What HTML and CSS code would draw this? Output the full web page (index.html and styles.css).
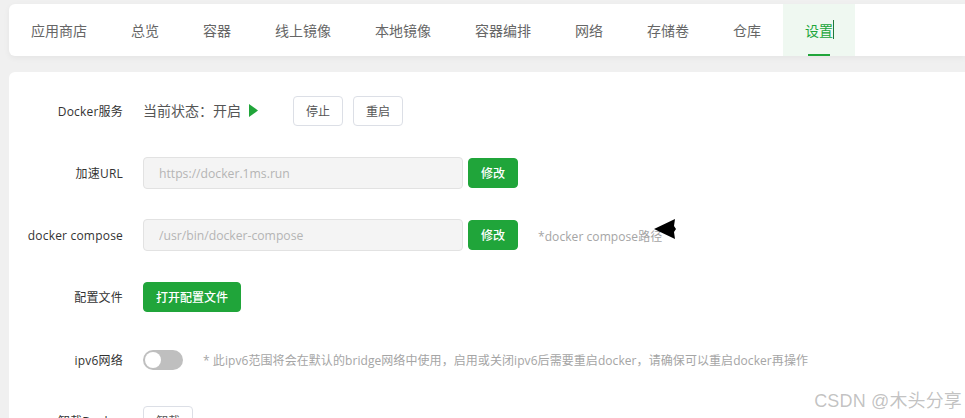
FILE: index.html
```html
<!DOCTYPE html>
<html lang="zh-CN">
<head>
<meta charset="utf-8">
<title>Docker 设置</title>
<link rel="stylesheet" href="styles.css">
</head>
<body>
<nav class="tabs">
  <a class="tab">应用商店</a>
  <a class="tab">总览</a>
  <a class="tab">容器</a>
  <a class="tab">线上镜像</a>
  <a class="tab">本地镜像</a>
  <a class="tab">容器编排</a>
  <a class="tab">网络</a>
  <a class="tab">存储卷</a>
  <a class="tab">仓库</a>
  <a class="tab tab-active">设置<i class="caret"></i></a>
</nav>
<main class="card">
  <div class="row">
    <label class="label">Docker服务</label>
    <div class="control">
      <span class="status">当前状态：开启</span>
      <svg class="play" width="9" height="13" viewBox="0 0 9 13"><path d="M0 0L9 6.5L0 13Z" fill="#20a53a"/></svg>
      <button class="btn btn-first">停止</button>
      <button class="btn">重启</button>
    </div>
  </div>
  <div class="row">
    <label class="label">加速URL</label>
    <div class="control">
      <input class="input" disabled placeholder="https://docker.1ms.run">
      <button class="btn btn-primary btn-edit">修改</button>
    </div>
  </div>
  <div class="row">
    <label class="label">docker compose</label>
    <div class="control">
      <input class="input" disabled placeholder="/usr/bin/docker-compose">
      <button class="btn btn-primary btn-edit">修改</button>
      <span class="hint hint-compose">*docker compose路径</span>
    </div>
  </div>
  <div class="row">
    <label class="label">配置文件</label>
    <div class="control">
      <button class="btn btn-primary btn-wide">打开配置文件</button>
    </div>
  </div>
  <div class="row row-switch">
    <label class="label">ipv6网络</label>
    <div class="control">
      <span class="switch"><i class="knob"></i></span>
      <span class="hint hint-switch">* 此ipv6范围将会在默认的bridge网络中使用，启用或关闭ipv6后需要重启docker，请确保可以重启docker再操作</span>
    </div>
  </div>
  <div class="row">
    <label class="label">卸载Docker</label>
    <div class="control">
      <button class="btn">卸载</button>
    </div>
  </div>
</main>
<svg class="pointer" width="24" height="22" viewBox="0 0 24 22"><path d="M1 11L22 1L21 8L23 11L21 14L22 21Z" fill="#000"/></svg>
<div class="watermark">CSDN @木头分享</div>
</body>
</html>
```

FILE: styles.css
```css
* { box-sizing: border-box; }
html, body { height: 100%; }
body {
  margin: 0;
  height: 418px;
  overflow: hidden;
  position: relative;
  padding: 4px 0 0 9px;
  background: #f0f0f0;
  font-family: "Open Sans", "Noto Sans CJK SC", sans-serif;
  color: #333;
}
.tabs {
  display: flex;
  height: 52px;
  background: #fff;
  border-radius: 6px 0 0 6px;
  box-shadow: 0 2px 6px rgba(0, 0, 0, .05);
}
.tab {
  position: relative;
  display: flex;
  align-items: center;
  padding: 0 22px;
  font-size: 14px;
  color: #666;
}
.tab-active {
  color: #20a53a;
  background: #eff8f1;
}
.tab-active::after {
  content: "";
  position: absolute;
  left: 25px;
  bottom: 0;
  width: 22px;
  height: 2px;
  background: #20a53a;
}
.caret {
  position: absolute;
  left: 50px;
  top: 16px;
  width: 1px;
  height: 19px;
  background: #1f7a3a;
}
.card {
  margin-top: 16px;
  height: 360px;
  padding-top: 23px;
  background: #fff;
  border-radius: 6px 0 0 0;
}
.row {
  display: flex;
  align-items: center;
  height: 32px;
  margin-bottom: 30px;
}
.row-switch { padding-top: 2px; }
.label {
  width: 114px;
  margin-right: 20px;
  text-align: right;
  font-size: 12px;
  letter-spacing: .2px;
  color: #333;
  white-space: nowrap;
}
.control {
  display: flex;
  align-items: center;
}
.status {
  margin-top: -2px;
  font-size: 14px;
  color: #555;
}
.play { margin-left: 8px; margin-top: -2px; }
.btn {
  width: 50px;
  height: 30px;
  padding: 0;
  margin-right: 10px;
  border: 1px solid #dcdfe6;
  border-radius: 4px;
  background: #fff;
  font: inherit;
  font-size: 12px;
  color: #555;
}
.btn-first { margin-left: 35px; }
.btn-primary {
  border-color: #20a53a;
  background: #20a53a;
  color: #fff;
  font-weight: 500;
}
.btn-edit { margin-left: 5px; margin-right: 0; }
.btn-wide { width: 98px; }
.input {
  width: 320px;
  height: 32px;
  padding: 0 15px;
  border: 1px solid #e2e2e2;
  border-radius: 4px;
  background: #f4f4f4;
  font: inherit;
  font-size: 12.2px;
}
.input::placeholder { color: #b5b5b5; opacity: 1; }
.hint {
  font-size: 12px;
  letter-spacing: .07px;
  color: #a5a5a5;
  white-space: nowrap;
}
.hint-compose { margin-left: 20px; margin-top: 1px; }
.hint-switch { margin-left: 20px; margin-top: -1px; }
.switch {
  position: relative;
  width: 40px;
  height: 20px;
  border-radius: 10px;
  background: #bfbfbf;
}
.knob {
  position: absolute;
  left: 2px;
  top: 2px;
  width: 16px;
  height: 16px;
  border-radius: 50%;
  background: #fff;
}
.pointer {
  position: absolute;
  left: 653px;
  top: 218px;
}
.watermark {
  position: absolute;
  right: 3px;
  top: 386px;
  font-family: "Liberation Sans", "Noto Sans CJK SC", sans-serif;
  font-size: 18px;
  letter-spacing: .15px;
  color: rgba(120, 120, 120, .45);
  white-space: nowrap;
}
```
